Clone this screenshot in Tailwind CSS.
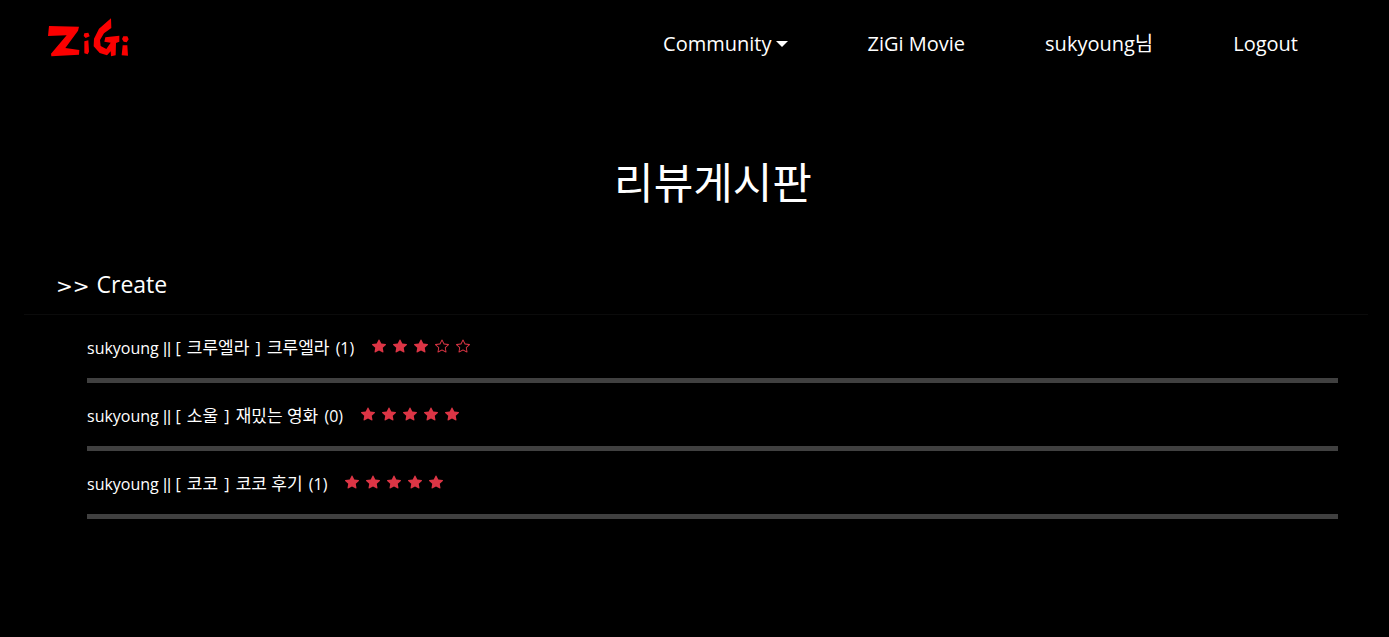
<!DOCTYPE html>
<html lang="ko">
<head>
<meta charset="utf-8">
<meta name="viewport" content="width=device-width, initial-scale=1">
<title>ZiGi</title>
<script src="https://cdn.jsdelivr.net/npm/@tailwindcss/browser@4"></script>
</head>
<body class="min-h-screen bg-black text-white font-['Open_Sans','Noto_Sans_CJK_KR',sans-serif]">
<svg class="hidden">
  <symbol id="star-fill" viewBox="0 0 16 16"><path d="M3.612 15.443c-.386.198-.824-.149-.746-.592l.83-4.73L.173 6.765c-.329-.314-.158-.888.283-.95l4.898-.696L7.538.792c.197-.39.73-.39.927 0l2.184 4.327 4.898.696c.441.062.612.636.282.95l-3.522 3.356.83 4.73c.078.443-.36.79-.746.592L8 13.187l-4.389 2.256z"/></symbol>
  <symbol id="star" viewBox="0 0 16 16"><path d="M2.866 14.85c-.078.444.36.791.746.593l4.39-2.256 4.389 2.256c.386.198.824-.149.746-.592l-.83-4.73 3.522-3.356c.33-.314.16-.888-.282-.95l-4.898-.696L8.465.792a.513.513 0 0 0-.927 0L5.354 5.12l-4.898.696c-.441.062-.612.636-.283.95l3.523 3.356-.83 4.73zm4.905-2.767-3.686 1.894.694-3.957a.565.565 0 0 0-.163-.505L1.71 6.745l4.052-.576a.525.525 0 0 0 .393-.288L8 2.223l1.847 3.658a.525.525 0 0 0 .393.288l4.052.575-2.906 2.77a.565.565 0 0 0-.163.506l.694 3.957-3.686-1.894a.503.503 0 0 0-.461 0z"/></symbol>
</svg>
<header class="flex items-center justify-between pl-10 pr-[91px] pt-[10px]">
  <a href="#" aria-label="ZiGi">
    <svg class="h-[55px] w-[100px]" viewBox="0 0 300 165" fill="#fb0000">
      <path d="M27 48L117 50L114 62L76 114L118 120L117 134L34 139L33 131L80 76L24 78Z"/>
      <path d="M133 70L145 68L149 79L137 84L131 78ZM133 94L145 91L147 125L143 133L133 130Z"/>
      <path d="M213 25L214 54L192 70L180 90L182 108L199 117L212 98L193 95L196 82L238 77L238 95L228 99L227 136L213 139L212 124L201 136L179 129L161 109L162 86L177 56Z"/>
      <path d="M250 79L262 79L266 88L260 97L251 95L246 87ZM248 106L262 106L264 137L245 136Z"/>
    </svg>
  </a>
  <nav class="flex gap-20 pt-3 text-xl">
    <button type="button" class="flex items-center gap-1">Community<svg class="h-[6px] w-3" viewBox="0 0 12 6" fill="currentColor"><path d="M0 0H12L6 6Z"/></svg></button>
    <a href="#">ZiGi Movie</a>
    <a href="#">sukyoung님</a>
    <a href="#">Logout</a>
  </nav>
</header>
<main class="pl-6 pr-[21px] pt-[86px]">
  <h1 class="pl-[34px] text-center text-[43px] leading-[64px]">리뷰게시판</h1>
  <div class="mt-[51px] border-b border-[#0b0b0b] pb-[10px] pl-8 text-[23px] leading-9"><a href="#" class="inline-flex items-baseline gap-[7px]"><span class="font-['DejaVu_Sans',sans-serif] text-xl leading-9">&gt;&gt;</span> Create</a></div>
  <ul class="ml-[63px] mr-[30px]">
    <li class="flex h-[68px] items-center gap-[18px] border-b-5 border-[#404040]">
      <a href="#" class="pt-0.5">sukyoung <span class="font-['Liberation_Sans',sans-serif]">||</span> [ <span class="mx-0.5 text-[17px]">크루엘라</span> ] <span class="mx-0.5 text-[17px]">크루엘라</span> (1)</a>
      <span class="flex gap-[7px] pb-0.5 text-[#dc3545]" role="img" aria-label="3 / 5">
        <svg class="size-[14px]" fill="currentColor"><use href="#star-fill"/></svg><svg class="size-[14px]" fill="currentColor"><use href="#star-fill"/></svg><svg class="size-[14px]" fill="currentColor"><use href="#star-fill"/></svg><svg class="size-[14px]" fill="currentColor"><use href="#star"/></svg><svg class="size-[14px]" fill="currentColor"><use href="#star"/></svg>
      </span>
    </li>
    <li class="flex h-[68px] items-center gap-[18px] border-b-5 border-[#404040]">
      <a href="#" class="pt-0.5">sukyoung <span class="font-['Liberation_Sans',sans-serif]">||</span> [ <span class="mx-0.5 text-[17px]">소울</span> ] <span class="mx-0.5 text-[17px]">재밌는 영화</span> (0)</a>
      <span class="flex gap-[7px] pb-0.5 text-[#dc3545]" role="img" aria-label="5 / 5">
        <svg class="size-[14px]" fill="currentColor"><use href="#star-fill"/></svg><svg class="size-[14px]" fill="currentColor"><use href="#star-fill"/></svg><svg class="size-[14px]" fill="currentColor"><use href="#star-fill"/></svg><svg class="size-[14px]" fill="currentColor"><use href="#star-fill"/></svg><svg class="size-[14px]" fill="currentColor"><use href="#star-fill"/></svg>
      </span>
    </li>
    <li class="flex h-[68px] items-center gap-[18px] border-b-5 border-[#404040]">
      <a href="#" class="pt-0.5">sukyoung <span class="font-['Liberation_Sans',sans-serif]">||</span> [ <span class="mx-0.5 text-[17px]">코코</span> ] <span class="mx-0.5 text-[17px]">코코 후기</span> (1)</a>
      <span class="flex gap-[7px] pb-0.5 text-[#dc3545]" role="img" aria-label="5 / 5">
        <svg class="size-[14px]" fill="currentColor"><use href="#star-fill"/></svg><svg class="size-[14px]" fill="currentColor"><use href="#star-fill"/></svg><svg class="size-[14px]" fill="currentColor"><use href="#star-fill"/></svg><svg class="size-[14px]" fill="currentColor"><use href="#star-fill"/></svg><svg class="size-[14px]" fill="currentColor"><use href="#star-fill"/></svg>
      </span>
    </li>
  </ul>
</main>
</body>
</html>
